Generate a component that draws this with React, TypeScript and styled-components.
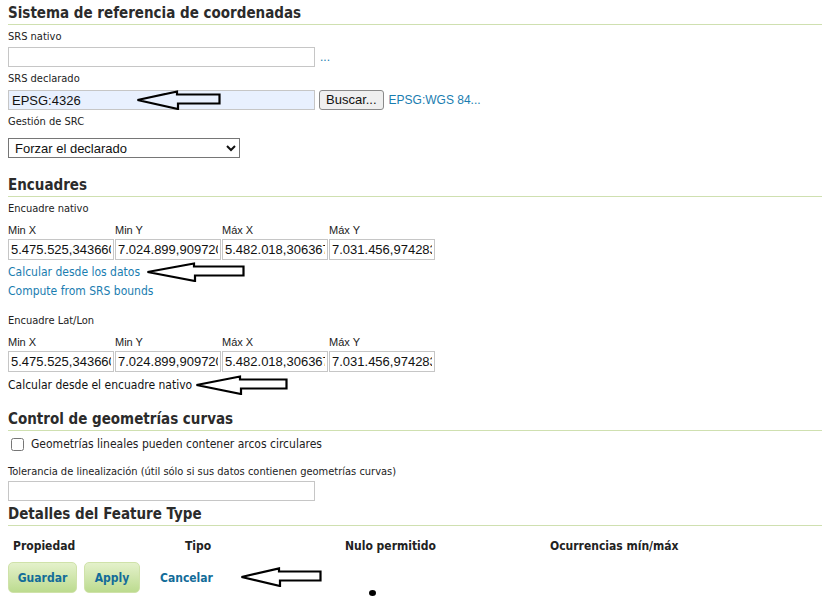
import * as React from "react";
import styled, { createGlobalStyle } from "styled-components";

const GlobalStyle = createGlobalStyle`
  html, body {
    margin: 0;
    padding: 0;
    background: #fff;
    overflow: hidden;
  }
  body {
    font-family: "DejaVu Sans Condensed", "DejaVu Sans", sans-serif;
    color: #222;
  }
`;

const SPage = styled.div`
  width: 822px;
  height: 597px;
  padding-left: 8px;
  box-sizing: border-box;
  position: relative;
`;

const SHeading = styled.h2<{ $top: number }>`
  margin: ${(p) => p.$top}px 0 0 0;
  padding: 4px 0 2px 0;
  font-size: 15px;
  line-height: 17px;
  font-weight: bold;
  color: #2b2b2b;
  border-bottom: 1px solid #cfe0b0;
`;

const SLabel = styled.div<{ $top?: number }>`
  margin-top: ${(p) => p.$top ?? 5}px;
  font-size: 11px;
  line-height: 14px;
  color: #222;
`;

const SRow = styled.div<{ $top?: number }>`
  display: flex;
  align-items: center;
  margin-top: ${(p) => p.$top ?? 3}px;
`;

const SFieldWrap = styled.div`
  position: relative;
  display: flex;
`;

const STextInput = styled.input<{ $filled?: boolean }>`
  width: 307px;
  height: 20px;
  box-sizing: border-box;
  margin: 0;
  padding: 1px 3px;
  border: 1px solid #c6c6c6;
  background: ${(p) => (p.$filled ? "#e8f0fe" : "#fff")};
  font-family: "Liberation Sans", Arial, sans-serif;
  font-size: 13px;
  color: #111;
  outline: none;
`;

const SLink = styled.a<{ $size?: number }>`
  color: #1a7db0;
  text-decoration: none;
  font-size: ${(p) => p.$size ?? 12}px;
  cursor: pointer;
`;

const SArialLink = styled(SLink)`
  font-family: "Liberation Sans", Arial, sans-serif;
`;

const SNativeButton = styled.button`
  height: 20px;
  margin: 0 5px 0 4px;
  padding: 0 6px;
  font-family: "Liberation Sans", Arial, sans-serif;
  font-size: 13px;
  line-height: 18px;
  color: #111;
  background: #efefef;
  border: 1px solid #8a8a8a;
  border-radius: 3px;
`;

const SSelect = styled.select`
  width: 232px;
  height: 20px;
  margin: 0;
  padding: 0 2px;
  font-family: "Liberation Sans", Arial, sans-serif;
  font-size: 13px;
  color: #111;
  border: 1px solid #767676;
  border-radius: 0;
  background: #fff;
`;

const SBoundsGrid = styled.div`
  display: grid;
  grid-template-columns: repeat(4, 106px);
  column-gap: 1px;
  margin-top: 7px;
`;

const SBoundsLabel = styled.div`
  font-family: "Liberation Sans", Arial, sans-serif;
  font-size: 11px;
  line-height: 14px;
  color: #222;
  padding-bottom: 2px;
`;

const SBoundsInput = styled.input`
  width: 106px;
  height: 21px;
  box-sizing: border-box;
  margin: 0;
  padding: 1px 2px;
  border: 1px solid #c6c6c6;
  font-family: "Liberation Sans", Arial, sans-serif;
  font-size: 13px;
  color: #111;
  outline: none;
`;

const SActionLine = styled.div<{ $top?: number }>`
  position: relative;
  margin-top: ${(p) => p.$top ?? 0}px;
  font-size: 12px;
  line-height: 19px;
  color: #111;
`;

const SCheckRow = styled.label`
  display: flex;
  align-items: center;
  gap: 7px;
  margin-top: 6px;
  padding-left: 3px;
  font-size: 12px;
  line-height: 14px;
  color: #222;
`;

const SCheck = styled.input`
  width: 13px;
  height: 13px;
  margin: 0;
`;

const STableHead = styled.div`
  display: grid;
  grid-template-columns: 172px 160px 205px 200px;
  margin-top: 13px;
  padding-left: 5px;
  font-size: 12px;
  line-height: 14px;
  font-weight: bold;
  color: #222;
`;

const SActions = styled.div`
  position: relative;
  display: flex;
  align-items: center;
  gap: 7px;
  margin-top: 9px;
`;

const SGreenButton = styled.button<{ $w: number }>`
  width: ${(p) => p.$w}px;
  height: 31px;
  padding: 0;
  font-family: inherit;
  font-size: 12px;
  font-weight: bold;
  color: #136c99;
  border: 1px solid #cfe2a9;
  border-radius: 5px;
  background: linear-gradient(#e4f1cb, #bcdb8f);
`;

const SCancel = styled(SLink)`
  margin-left: 13px;
  font-weight: bold;
  color: #136c99;
`;

const SArrowBox = styled.div<{ $left: number; $top: number }>`
  position: absolute;
  left: ${(p) => p.$left}px;
  top: ${(p) => p.$top}px;
  line-height: 0;
  pointer-events: none;
`;

const SDot = styled.div`
  position: absolute;
  left: 369px;
  top: 589px;
  width: 7px;
  height: 6px;
  border-radius: 50%;
  background: #000;
`;

const Arrow = ({ left, top, w = 86 }: { left: number; top: number; w?: number }) => {
  const h = 20;
  const head = Math.round(w * 0.48);
  return (
    <SArrowBox $left={left} $top={top}>
      <svg width={w} height={h} viewBox={`0 0 ${w} ${h}`}>
        <path
          d={`M1.5 ${h / 2} L${head} 1.5 L${head} 4.5 L${w - 1.5} 4.5 L${w - 1.5} 13.5 L${head + 1} 13.5 L${head + 1} ${h - 1} Z`}
          fill="none"
          stroke="#000"
          strokeWidth={2.2}
          strokeLinejoin="miter"
        />
      </svg>
    </SArrowBox>
  );
};

const boundsLabels = ["Min X", "Min Y", "Máx X", "Máx Y"];
const boundsValues = ["5.475.525,34366083", "7.024.899,90972003", "5.482.018,30636741", "7.031.456,97428372"];

const Bounds = () => (
  <SBoundsGrid>
    {boundsLabels.map((l) => (
      <SBoundsLabel key={l}>{l}</SBoundsLabel>
    ))}
    {boundsValues.map((v) => (
      <SBoundsInput key={v} defaultValue={v} />
    ))}
  </SBoundsGrid>
);

export default function App() {
  return (
    <SPage>
      <GlobalStyle />
      <SHeading $top={1}>Sistema de referencia de coordenadas</SHeading>

      <SLabel $top={5}>SRS nativo</SLabel>
      <SRow>
        <STextInput />
        <SArialLink $size={12} style={{ marginLeft: 5 }}>...</SArialLink>
      </SRow>

      <SLabel>SRS declarado</SLabel>
      <SRow $top={4}>
        <SFieldWrap>
          <STextInput $filled defaultValue="EPSG:4326" />
          <Arrow left={128} top={0} w={85} />
        </SFieldWrap>
        <SNativeButton>Buscar...</SNativeButton>
        <SArialLink $size={12}>EPSG:WGS 84...</SArialLink>
      </SRow>

      <SLabel>Gestión de SRC</SLabel>
      <SRow $top={9}>
        <SSelect defaultValue="force">
          <option value="force">Forzar el declarado</option>
          <option value="keep">Mantener nativo</option>
          <option value="reproject">Reproyectar nativo a declarado</option>
        </SSelect>
      </SRow>

      <SHeading $top={15}>Encuadres</SHeading>
      <SLabel $top={5}>Encuadre nativo</SLabel>
      <Bounds />
      <SActionLine $top={3}>
        <SLink>Calcular desde los datos</SLink>
        <Arrow left={138} top={-1} w={99} />
      </SActionLine>
      <SActionLine>
        <SLink>Compute from SRS bounds</SLink>
      </SActionLine>

      <SLabel $top={13}>Encuadre Lat/Lon</SLabel>
      <Bounds />
      <SActionLine $top={4}>
        Calcular desde el encuadre nativo
        <Arrow left={187} top={-1} w={93} />
      </SActionLine>

      <SHeading $top={12}>Control de geometrías curvas</SHeading>
      <SCheckRow>
        <SCheck type="checkbox" />
        Geometrías lineales pueden contener arcos circulares
      </SCheckRow>
      <SLabel $top={14}>Tolerancia de linealización (útil sólo si sus datos contienen geometrías curvas)</SLabel>
      <SRow $top={2}>
        <STextInput />
      </SRow>

      <SHeading $top={1}>Detalles del Feature Type</SHeading>
      <STableHead>
        <span>Propiedad</span>
        <span>Tipo</span>
        <span>Nulo permitido</span>
        <span>Ocurrencias mín/máx</span>
      </STableHead>
      <SActions>
        <SGreenButton $w={69}>Guardar</SGreenButton>
        <SGreenButton $w={56}>Apply</SGreenButton>
        <SCancel>Cancelar</SCancel>
        <Arrow left={232} top={5} w={82} />
      </SActions>
      <SDot />
    </SPage>
  );
}
